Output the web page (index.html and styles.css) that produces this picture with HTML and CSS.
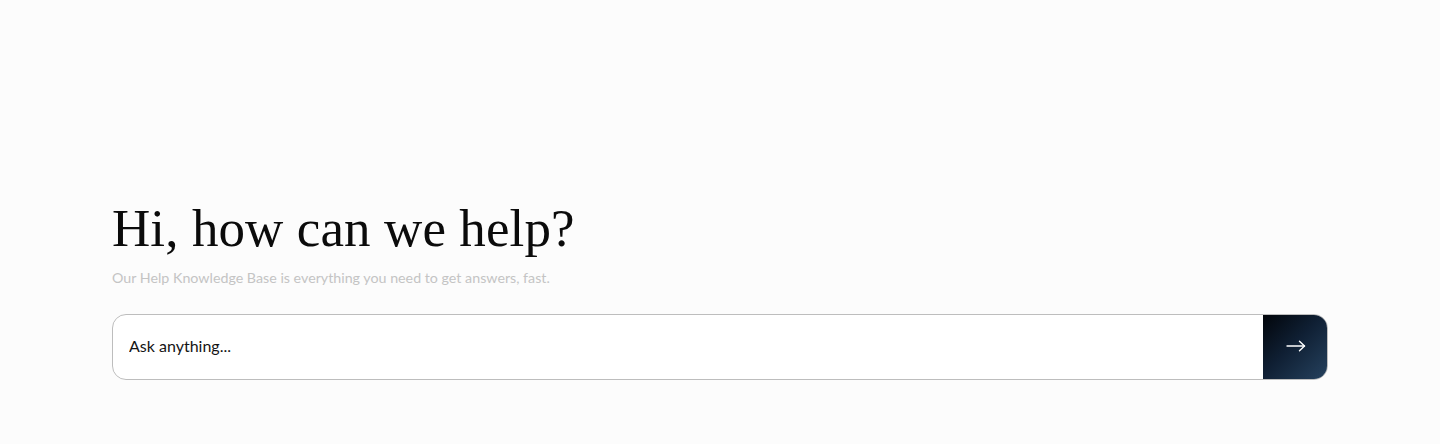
FILE: index.html
```html
<!DOCTYPE html>
<html lang="en">
<head>
<meta charset="utf-8">
<title>Help</title>
<link rel="stylesheet" href="styles.css">
</head>
<body>
<main class="hero">
  <h1 class="title">Hi, how can we help?</h1>
  <p class="subtitle">Our Help Knowledge Base is everything you need to get answers, fast.</p>
  <form class="search">
    <input class="search-input" type="text" placeholder="Ask anything...">
    <button class="search-btn" type="button" aria-label="Search">
      <svg width="20" height="12" viewBox="0 0 20 12" fill="none" stroke="#ffffff" stroke-width="1.4" stroke-linecap="round" stroke-linejoin="round">
        <path d="M1 6H18.5"/>
        <path d="M13.5 1.2L18.5 6L13.5 10.8"/>
      </svg>
    </button>
  </form>
</main>
</body>
</html>
```
FILE: styles.css
```css
html, body {
  margin: 0;
  padding: 0;
}
body {
  background: #fcfcfc;
  width: 1440px;
  height: 444px;
  overflow: hidden;
}
.hero {
  padding: 196px 112px 0 112px;
  display: flex;
  flex-direction: column;
}
.title {
  margin: 0;
  font-family: "Liberation Serif", "DejaVu Serif", serif;
  font-weight: 400;
  font-size: 53px;
  line-height: 64px;
  letter-spacing: 0.1px;
  color: #0b0b0b;
}
.subtitle {
  margin: 8px 0 0 0;
  font-family: "Lato", "Liberation Sans", sans-serif;
  font-size: 14.25px;
  line-height: 20px;
  color: #c4c4c4;
}
.search {
  margin-top: 26px;
  display: flex;
  height: 66px;
  width: 1216px;
  box-sizing: border-box;
  border: 1px solid #bdbdbd;
  border-radius: 14px;
  background: #ffffff;
  overflow: hidden;
}
.search-input {
  flex: 1;
  border: 0;
  outline: none;
  background: transparent;
  padding: 0 16px 3px 16px;
  font-family: "Lato", "Liberation Sans", sans-serif;
  font-size: 16px;
  color: #111;
}
.search-input::placeholder {
  color: #141414;
  opacity: 1;
}
.search-btn {
  width: 65px;
  border: 0;
  margin: -1px -1px -1px 0;
  padding: 0 0 3px 0;
  background: linear-gradient(135deg, #02050a 0%, #0f1f33 45%, #26425f 100%);
  display: flex;
  align-items: center;
  justify-content: center;
  cursor: pointer;
}
```
